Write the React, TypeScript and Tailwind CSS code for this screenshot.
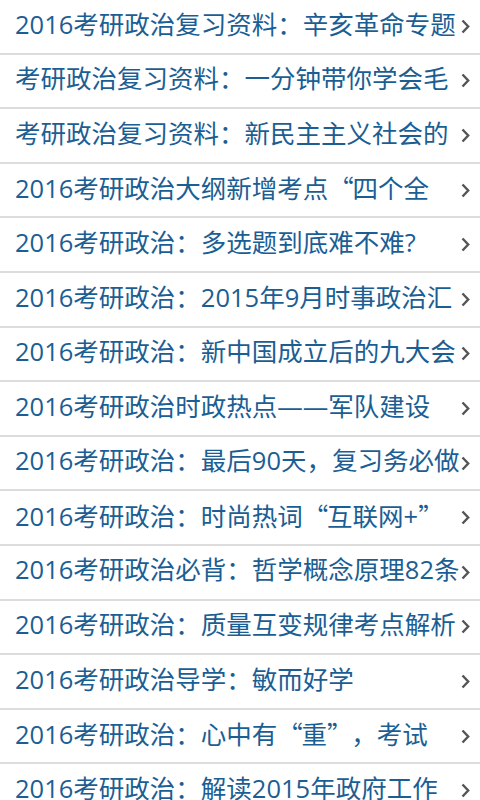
import React from "react";

const items = [
  "2016考研政治复习资料：辛亥革命专题",
  "考研政治复习资料：一分钟带你学会毛",
  "考研政治复习资料：新民主主义社会的",
  "2016考研政治大纲新增考点“四个全",
  "2016考研政治：多选题到底难不难?",
  "2016考研政治：2015年9月时事政治汇",
  "2016考研政治：新中国成立后的九大会",
  "2016考研政治时政热点——军队建设",
  "2016考研政治：最后90天，复习务必做",
  "2016考研政治：时尚热词“互联网+”",
  "2016考研政治必背：哲学概念原理82条",
  "2016考研政治：质量互变规律考点解析",
  "2016考研政治导学：敏而好学",
  "2016考研政治：心中有“重”，考试",
  "2016考研政治：解读2015年政府工作",
];

function renderText(t: string) {
  const parts: React.ReactNode[] = [];
  let buf = "";
  let k = 0;
  for (const ch of t) {
    if (ch === "“" || ch === "”") {
      if (buf) parts.push(<span key={k++}>{buf}</span>);
      buf = "";
      parts.push(
        <span
          key={k++}
          className={
            "inline-block w-[0.95em] " + (ch === "“" ? "text-right" : "text-left")
          }
          style={{ fontFamily: '"Noto Sans CJK SC", sans-serif' }}
        >
          {ch}
        </span>
      );
    } else {
      buf += ch;
    }
  }
  if (buf) parts.push(<span key={k++}>{buf}</span>);
  return parts;
}

function Chevron() {
  return (
    <svg width="9" height="15" viewBox="0 0 9 15" className="shrink-0">
      <polyline
        points="1.5,1.5 7.2,7.5 1.5,13.5"
        fill="none"
        stroke="#555555"
        strokeWidth="2.4"
      />
    </svg>
  );
}

export default function App() {
  return (
    <div
      className="w-[480px] h-[800px] overflow-hidden bg-white"
      style={{ fontFamily: '"Open Sans", "Noto Sans CJK SC", sans-serif' }}
    >
      {items.map((t, i) => (
        <div
          key={i}
          className="h-[54.6px] flex items-center pl-[15px] pr-[10px] border-b-2 border-[#dcdcdc]"
        >
          <div className="flex-1 min-w-0 whitespace-nowrap text-[25.5px] leading-none pb-[4px] text-[#1b5e94]">
            {renderText(t)}
          </div>
          <Chevron />
        </div>
      ))}
    </div>
  );
}
